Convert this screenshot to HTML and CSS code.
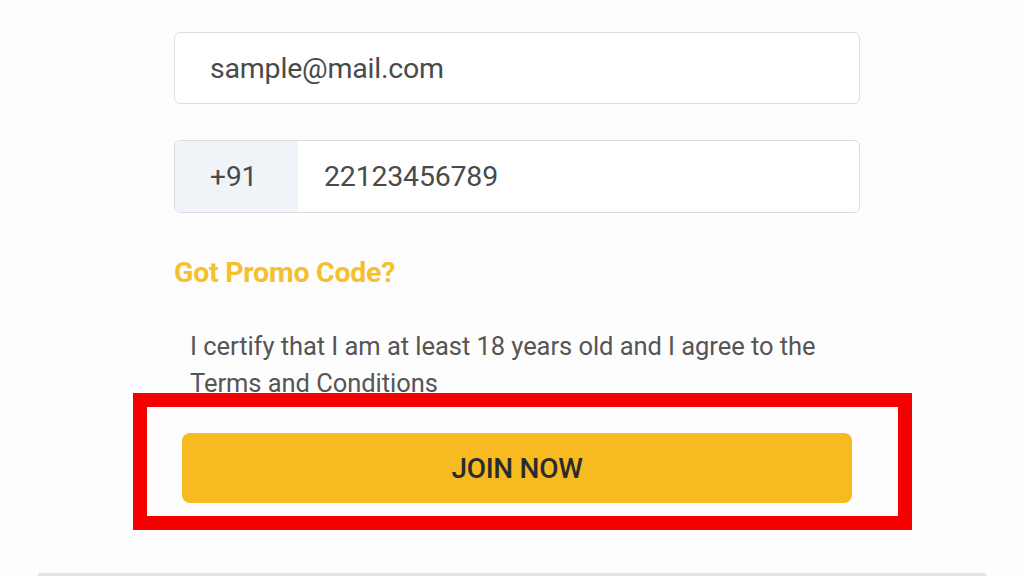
FILE: index.html
```html
<!DOCTYPE html>
<html lang="en">
<head>
<meta charset="utf-8">
<title>Join</title>
<link rel="stylesheet" href="styles.css">
</head>
<body>
<div class="page">
  <form class="form">
    <div class="field">
      <span class="value">sample@mail.com</span>
    </div>
    <div class="field phone">
      <span class="prefix">+91</span>
      <span class="value num">22123456789</span>
    </div>
    <a class="promo">Got Promo Code?</a>
    <p class="certify">I certify that I am at least 18 years old and I agree to the Terms and Conditions</p>
    <div class="btn-wrap">
      <button type="button" class="join">JOIN NOW</button>
      <div class="highlight"></div>
    </div>
  </form>
  <div class="divider"></div>
</div>
</body>
</html>
```
FILE: styles.css
```css
* { box-sizing: border-box; }
html, body { margin: 0; padding: 0; }
body {
  background: #fdfdfd;
  font-family: Roboto, "Liberation Sans", Arial, sans-serif;
  width: 1024px;
  height: 576px;
  overflow: hidden;
}
.page {
  position: relative;
  height: 576px;
  padding-top: 32px;
}
.form {
  width: 686px;
  margin-left: 174px;
  display: flex;
  flex-direction: column;
}
.field {
  height: 72px;
  border: 1.5px solid #d9dee4;
  border-radius: 6px;
  background: #fff;
  display: flex;
  align-items: center;
  overflow: hidden;
}
.field .value {
  font-size: 28.5px;
  color: #4a4a4a;
  padding-left: 35px;
  letter-spacing: -0.2px;
}
.phone {
  margin-top: 36px;
  height: 73px;
}
.prefix {
  width: 123px;
  height: 100%;
  background: #f0f4f8;
  display: flex;
  align-items: center;
  padding-left: 35px;
  font-size: 28px;
  color: #4a4a4a;
}
.phone .value { padding-left: 26px; font-size: 28.5px; }
.promo {
  margin-top: 43px;
  font-size: 28.5px;
  font-weight: 700;
  color: #f4c02d;
  line-height: 34px;
  letter-spacing: -0.25px;
}
.certify {
  margin: 38px 0 0;
  padding-left: 16px;
  padding-right: 20px;
  font-size: 25.5px;
  line-height: 37px;
  color: #555;
  letter-spacing: -0.05px;
}
.btn-wrap {
  position: relative;
  margin-top: 31px;
  padding: 0 8px;
}
.join {
  display: block;
  width: 100%;
  height: 70px;
  border: none;
  border-radius: 8px;
  background: #f7ba21;
  font-family: Roboto, "Liberation Sans", Arial, sans-serif;
  font-size: 28px;
  font-weight: 500;
  color: #2b2b2b;
  letter-spacing: -0.3px;
}
.highlight {
  position: absolute;
  left: -41px;
  top: -40px;
  width: 779px;
  height: 137px;
  border: 14px solid #f50000;
}
.divider {
  position: absolute;
  left: 38px;
  right: 38px;
  bottom: 0;
  height: 3px;
  background: #e2e4e7;
}
```
